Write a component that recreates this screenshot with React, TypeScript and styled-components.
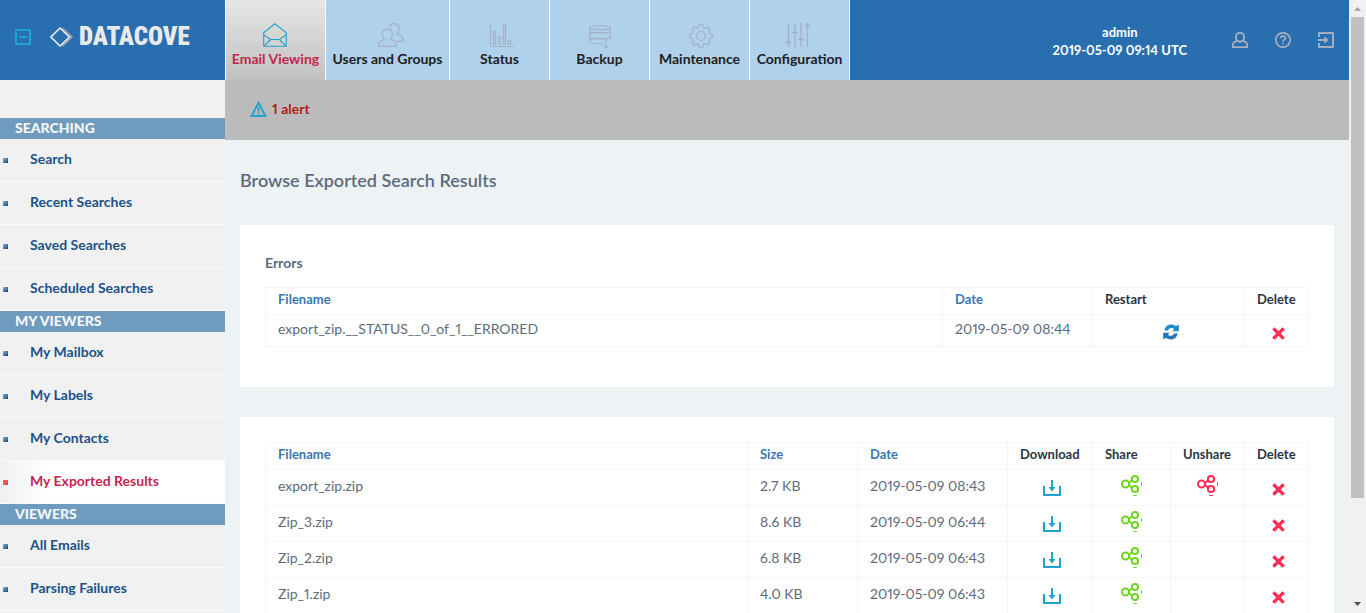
import React from "react";
import styled, { createGlobalStyle, css } from "styled-components";

const GlobalStyle = createGlobalStyle`
  *, *::before, *::after { box-sizing: border-box; }
  body {
    margin: 0;
    background: #edf2f5;
    color: #5c6b7c;
    font-family: Lato, "Liberation Sans", sans-serif;
    font-size: 14px;
    font-variant-numeric: proportional-nums;
    line-height: 18px;
  }
  a { color: inherit; text-decoration: none; }
  button { margin: 0; padding: 0; border: 0; background: none; color: inherit; font: inherit; cursor: pointer; }
  svg { display: block; overflow: visible; }
`;

const Window = styled.div`
  display: flex;
  height: 100vh;
`;

const Page = styled.div`
  display: flex;
  flex: 1;
  flex-direction: column;
  min-width: 0;
  overflow-y: auto;
  scrollbar-width: none;
`;

const ScrollRail = styled.div`
  display: flex;
  flex: none;
  flex-direction: column;
  align-items: center;
  width: 17px;
  background: #f1f1f1;
`;

const ScrollArrow = styled.div<{ $down?: boolean }>`
  display: flex;
  align-items: center;
  justify-content: center;
  height: 17px;
  color: ${(p) => (p.$down ? "#505050" : "#a3a3a3")};
  transform: ${(p) => (p.$down ? "rotate(180deg)" : "none")};
`;

const ScrollTrack = styled.div`
  display: flex;
  flex: 1;
  justify-content: center;
  width: 100%;
`;

const ScrollThumb = styled.div`
  width: 13px;
  height: 83%;
  background: #c1c1c1;
`;

const Header = styled.header`
  display: flex;
  flex: none;
  height: 80px;
  background: #296fb0;
`;

const Brand = styled.div`
  display: flex;
  flex: none;
  align-items: center;
  width: 225px;
  padding: 0 0 6px 15px;
`;

const CollapseButton = styled.button`
  margin-right: 19px;
  color: #1fa2cf;
`;

const Logo = styled.a`
  display: flex;
  align-items: center;
  gap: 6px;
  color: #e9eaec;
  font: 900 25px/30px "Roboto Condensed", "Open Sans Condensed", "Noto Sans Condensed", "DejaVu Sans Condensed", sans-serif;
`;

const Tabs = styled.nav`
  display: flex;
  flex: none;
  border-left: 1px solid #f7f9fa;
`;

const Tab = styled.a<{ $active?: boolean; $wide?: boolean }>`
  display: flex;
  flex-direction: column;
  align-items: center;
  gap: 3px;
  width: ${(p) => (p.$wide ? 124 : 100)}px;
  padding-top: 23px;
  border-right: 1px solid #f7f9fa;
  background: #afd1eb;
  color: #1d2023;
  font-weight: 700;
  white-space: nowrap;

  svg { color: #a3b0c8; }

  ${(p) =>
    p.$active &&
    css`
      background: linear-gradient(#e4e7e4, #c1c1c1);
      color: #c2274f;
      svg { color: #22a2cd; }
    `}
`;

const Account = styled.div`
  display: flex;
  flex: 1;
  align-items: center;
  justify-content: flex-end;
  padding-right: 15px;
`;

const AccountInfo = styled.div`
  margin-right: 45px;
  padding-top: 2px;
  color: #fff;
  font-size: 13px;
  font-weight: 700;
  text-align: center;
`;

const AccountActions = styled.div`
  display: flex;
  gap: 27px;
  color: #a5adc1;
`;

const Body = styled.div`
  display: flex;
  flex: 1 0 auto;
`;

const Sidebar = styled.nav`
  flex: none;
  width: 225px;
  padding-top: 38px;
  background: #f1f1f1;
`;

const SectionTitle = styled.h2`
  margin: 0;
  padding: 0 15px 2px;
  background: #6f9cbe;
  color: #f6f6f6;
  font-size: 14px;
  font-weight: 900;
  line-height: 19px;
`;

const SideList = styled.ul`
  margin: 0;
  padding: 0;
  list-style: none;
`;

const SideLink = styled.a<{ $active?: boolean }>`
  display: flex;
  align-items: center;
  gap: 22px;
  height: 43px;
  padding: 0 3px 2px;
  border-bottom: 1px solid #fafafa;
  color: ${(p) => (p.$active ? "#c2274f" : "#1c5289")};
  background: ${(p) => (p.$active ? "linear-gradient(90deg, #f1f1f1, #fff 50px)" : "none")};
  font-weight: 700;

  &::before {
    width: 5px;
    height: 5px;
    margin-top: 2px;
    background: ${(p) =>
      p.$active ? "linear-gradient(135deg, #f06a6a, #d84848)" : "linear-gradient(135deg, #86b0de, #173f78)"};
    content: "";
  }
`;

const Main = styled.main`
  flex: 1;
  min-width: 0;
`;

const AlertBar = styled.div`
  height: 60px;
  padding: 20px 25px;
  background: #bbb;
`;

const AlertLink = styled.a`
  display: inline-flex;
  align-items: center;
  gap: 5px;
  color: #b9191d;
  font-weight: 700;

  svg { color: #22a2cd; }
`;

const Content = styled.div`
  display: flex;
  flex-direction: column;
  gap: 30px;
  padding: 0 15px 30px;
`;

const PageTitle = styled.h1`
  margin: 30px 0 4px;
  font-size: 18px;
  font-weight: 600;
  line-height: 21px;
`;

const Panel = styled.section<{ $tall?: boolean }>`
  padding: 25px 25px ${(p) => (p.$tall ? 40 : 25)}px;
  background: #fff;
`;

const PanelTitle = styled.h2`
  margin: 4px 0 15px;
  font-size: 14px;
  font-weight: 700;
`;

const Table = styled.table`
  width: 100%;
  border-collapse: collapse;
  table-layout: fixed;

  th, td {
    border: 1px solid #f4f5f6;
    text-align: left;
    white-space: nowrap;
  }
`;

const Head = styled.th`
  height: 27px;
  padding: 0 8px 5px 12px;
  color: #2b3642;
  font-size: 13px;
  font-weight: 700;

  a { color: #3a76b4; }
`;

const Cell = styled.td<{ $short?: boolean }>`
  height: ${(p) => (p.$short ? 32 : 36)}px;
  padding: ${(p) => (p.$short ? 5 : 7)}px 8px 0 12px;
  vertical-align: top;
`;

const IconCell = styled(Cell)`
  padding: ${(p) => (p.$short ? 4 : 5)}px 8px 0 12px;
`;

const IconButton = styled.button<{ $color: string }>`
  display: block;
  margin: 0 auto;
  padding-top: 5px;
  color: ${(p) => p.$color};
`;

const ShareButton = styled(IconButton)`
  padding-top: 0;
`;

const line = { fill: "none", stroke: "currentColor" } as const;

const EmailIcon = () => (
  <svg width="24" height="24" viewBox="1 0 24 24" {...line} strokeWidth="1.1" aria-hidden="true">
    <path d="M.7 9.800 12 .7l11.300 9.100v13.500H.7ZM.7 11.800 7.600 16.500h8.800l6.900-4.700M.7 23.300l6.900-6.800M23.300 23.300l-6.900-6.800" />
  </svg>
);

const UsersIcon = () => (
  <svg width="26" height="24" viewBox="-3 0 26 24" {...line} strokeWidth="1.2" aria-hidden="true">
    <path d="M.7 23.400v-2.200c0-2.600 2.400-3.500 5.600-4.900C5 15.200 4.300 13.700 4.300 11.400c0-3.300 2.200-5.300 5-5.300s5 2 5 5.300c0 2.300-.7 3.800-2 4.900 3.200 1.400 5.900 2.300 5.900 4.900v2.200Z" />
    <path d="M11.300 4.500C12 2 13.600.7 16 .7c2.900 0 5 2 5 5.300 0 2.300-.7 3.800-2 4.900 3.200 1.400 5.900 2.300 5.900 4.900v2.600h-6.200" />
  </svg>
);

const StatusIcon = () => (
  <svg width="24" height="24" viewBox="-2 0 24 24" {...line} strokeWidth="1.200" aria-hidden="true">
    <path d="M.5 0v23.500H24" />
    <path d="M3.500 8h2v13.500h-2ZM8.500 13.500h2v8h-2ZM13.500 2h2v19.500h-2ZM18.500 17h2v4.500h-2Z" />
  </svg>
);

const BackupIcon = () => (
  <svg width="22" height="24" viewBox="0 -2 22 24" {...line} strokeWidth="1.100" aria-hidden="true">
    <ellipse cx="11" cy="2.700" rx="10.200" ry="2" />
    <path d="M.8 2.700v3c0 1.200 4.500 2.100 10.200 2.100s10.200-.9 10.200-2.100v-3" />
    <path d="M.8 5.700v6c0 1.200 4.500 2.100 10.200 2.100s10.200-.9 10.200-2.100v-6M.8 8.500c2-1.300 18.400-1.300 20.400 0" />
    <path d="M.8 11.700v5c0 1.300 4.500 2.100 10.200 2.100h2.500M21.200 11.700v3.300M.8 14.300c2-1.200 14-1.200 17 0" />
    <path d="M17 14.500v8.800M14.400 20.700 17 23.300l2.600-2.600" />
  </svg>
);

const gearPoint = (degrees: number, radius: number) => {
  const angle = (degrees * Math.PI) / 180;
  return `${(12 + radius * Math.cos(angle)).toFixed(2)} ${(12 + radius * Math.sin(angle)).toFixed(2)}`;
};

const gearPath =
  Array.from({ length: 8 }, (_, i) => {
    const a = i * 45;
    return `${i ? "L" : "M"}${gearPoint(a - 9, 11.4)}L${gearPoint(a + 9, 11.4)}L${gearPoint(a + 13, 9.4)}Q${gearPoint(a + 22.5, 8.4)} ${gearPoint(a + 32, 9.4)}`;
  }).join("") + "Z";

const GearIcon = () => (
  <svg width="24" height="24" viewBox="-1 -1 24 24" {...line} strokeWidth="1.200" strokeLinejoin="round" aria-hidden="true">
    <circle cx="12" cy="12" r="4.500" />
    <path d={gearPath} />
  </svg>
);

const SlidersIcon = () => (
  <svg width="24" height="24" viewBox="2 0 24 24" {...line} strokeWidth="1.300" aria-hidden="true">
    <path d="M2.500 0v24M9 0v24M15 0v24M21.500 0v24M0 19.500h5.500M6 9.500h6M12 16.500h6M19 2.500h5" />
  </svg>
);

const CollapseIcon = () => (
  <svg width="16" height="16" viewBox="0 0 16 16" {...line} strokeWidth="2" aria-hidden="true">
    <path d="M1 1h14v14H1ZM4 8h8" />
  </svg>
);

const DiamondIcon = () => (
  <svg width="23" height="20" viewBox="0 0 23 20" fill="none" aria-hidden="true">
    <path d="M12.500 1l9.500 9-9.500 9" stroke="#a9a4a2" strokeWidth="1.500" />
    <path d="M10 1l9.500 9-9.500 9L.9 10Z" stroke="#eef1f4" strokeWidth="1.600" />
  </svg>
);

const UserIcon = () => (
  <svg width="16" height="16" viewBox="0 0 16 16" {...line} strokeWidth="1.900" aria-hidden="true">
    <path d="M5.400 8.700C4.300 7.700 3.800 6.500 3.800 5a4.200 4.200 0 0 1 8.400 0c0 1.500-.5 2.700-1.600 3.700 2.400.8 4.500 1.700 4.500 4v2.400H.9v-2.400c0-2.300 2.100-3.200 4.500-4Zm0 0c1.500 1.200 3.700 1.200 5.200 0" />
  </svg>
);

const HelpIcon = () => (
  <svg width="16" height="16" viewBox="0 0 16 16" {...line} strokeWidth="1.700" aria-hidden="true">
    <circle cx="8" cy="8" r="7.200" />
    <path d="M5.800 6.300c0-1.300.9-2.100 2.200-2.100s2.300.8 2.300 2c0 1.500-2.300 1.600-2.300 3.300M8 10.700v1.600" />
  </svg>
);

const LogoutIcon = () => (
  <svg width="16" height="16" viewBox="0 0 16 16" {...line} strokeWidth="1.900" aria-hidden="true">
    <path d="M1 5V1h14v14H1V11M0 8h9M6.500 5.500 9.200 8l-2.700 2.500" />
  </svg>
);

const AlertIcon = () => (
  <svg width="17" height="16" viewBox="0 0 17 16" {...line} strokeWidth="1.900" aria-hidden="true">
    <path d="M8.500 1.800 15.500 15h-14ZM8.500 6v4.500M8.500 11.500v1.700" />
  </svg>
);

const RefreshIcon = () => (
  <svg width="16" height="16" viewBox="0 0 16 16" aria-hidden="true">
    <path d="M1.200 6.500C2.200 2.800 4.600.5 8 .5c2 0 3.600.6 5 1.700L15.800.6v6.600H9.200l2-2C9.200 3.300 6.300 3.800 4.800 6.500Z" fill="#1f8bc8" />
    <path d="M14.800 9.500c-1 3.700-3.400 6-6.800 6-2 0-3.600-.6-5-1.700L.2 15.400V8.800h6.600l-2 2c2 1.900 4.900 1.400 6.400-1.300Z" fill="#2473b4" />
  </svg>
);

const DeleteIcon = () => (
  <svg width="13" height="16" viewBox="0 -3 13 16" {...line} strokeWidth="3.400" aria-hidden="true">
    <path d="M1.400 1.400l10.200 10.200M11.600 1.400 1.400 11.600" />
  </svg>
);

const DownloadIcon = () => (
  <svg width="18" height="16" viewBox="0 0 18 16" {...line} strokeWidth="2" aria-hidden="true">
    <path d="M1 6v9h16V6M9 0v9" />
    <path d="M5.500 7h7L9 11.500Z" fill="currentColor" stroke="none" />
  </svg>
);

const ShareIcon = () => (
  <svg width="24" height="24" viewBox="1 0 24 24" {...line} strokeWidth="2" aria-hidden="true">
    <circle cx="4.500" cy="9" r="3.500" />
    <circle cx="14" cy="4" r="3.100" />
    <circle cx="14" cy="14" r="3.100" />
    <path d="M7.500 8c2 0 2-2.500 3.700-3M7.500 10c2 0 2 2.500 3.700 3" />
    <path d="M20.500 7.200v3.600M12.200 20.500h3.600" strokeWidth="1" />
  </svg>
);

const ArrowGlyph = () => (
  <svg width="7" height="4" viewBox="0 0 7 4" fill="currentColor" aria-hidden="true">
    <path d="M0 4 3.500 0 7 4Z" />
  </svg>
);

const tabs = [
  { label: "Email Viewing", Icon: EmailIcon, active: true },
  { label: "Users and Groups", Icon: UsersIcon, wide: true },
  { label: "Status", Icon: StatusIcon },
  { label: "Backup", Icon: BackupIcon },
  { label: "Maintenance", Icon: GearIcon },
  { label: "Configuration", Icon: SlidersIcon },
];

const sections = [
  { title: "SEARCHING", items: ["Search", "Recent Searches", "Saved Searches", "Scheduled Searches"] },
  { title: "MY VIEWERS", items: ["My Mailbox", "My Labels", "My Contacts", "My Exported Results"] },
  { title: "VIEWERS", items: ["All Emails", "Parsing Failures"] },
];

const exportsList = [
  { name: "export_zip.zip", size: "2.7 KB", date: "2019-05-09 08:43", shared: true },
  { name: "Zip_3.zip", size: "8.6 KB", date: "2019-05-09 06:44" },
  { name: "Zip_2.zip", size: "6.8 KB", date: "2019-05-09 06:43" },
  { name: "Zip_1.zip", size: "4.0 KB", date: "2019-05-09 06:43" },
];

const Columns = ({ widths }: { widths: number[] }) => (
  <colgroup>
    <col />
    {widths.map((width, i) => (
      <col key={i} width={width} />
    ))}
  </colgroup>
);

export default function App() {
  return (
    <Window>
      <GlobalStyle />
      <Page>
        <Header>
          <Brand>
            <CollapseButton aria-label="Collapse menu"><CollapseIcon /></CollapseButton>
            <Logo href="#"><DiamondIcon />DATACOVE</Logo>
          </Brand>
          <Tabs>
            {tabs.map(({ label, Icon, active, wide }) => (
              <Tab key={label} href="#" $active={active} $wide={wide}>
                <Icon />
                {label}
              </Tab>
            ))}
          </Tabs>
          <Account>
            <AccountInfo>
              <div>admin</div>
              <div>2019-05-09 09:14 UTC</div>
            </AccountInfo>
            <AccountActions>
              <button aria-label="Profile"><UserIcon /></button>
              <button aria-label="Help"><HelpIcon /></button>
              <button aria-label="Log out"><LogoutIcon /></button>
            </AccountActions>
          </Account>
        </Header>
        <Body>
          <Sidebar>
            {sections.map(({ title, items }) => (
              <React.Fragment key={title}>
                <SectionTitle>{title}</SectionTitle>
                <SideList>
                  {items.map((item) => (
                    <li key={item}>
                      <SideLink href="#" $active={item === "My Exported Results"}>{item}</SideLink>
                    </li>
                  ))}
                </SideList>
              </React.Fragment>
            ))}
          </Sidebar>
          <Main>
            <AlertBar>
              <AlertLink href="#"><AlertIcon />1 alert</AlertLink>
            </AlertBar>
            <Content>
              <PageTitle>Browse Exported Search Results</PageTitle>
              <Panel $tall>
                <PanelTitle>Errors</PanelTitle>
                <Table>
                  <Columns widths={[150, 152, 64]} />
                  <thead>
                    <tr>
                      <Head><a href="#">Filename</a></Head>
                      <Head><a href="#">Date</a></Head>
                      <Head>Restart</Head>
                      <Head>Delete</Head>
                    </tr>
                  </thead>
                  <tbody>
                    <tr>
                      <Cell $short>export_zip.__STATUS__0_of_1__ERRORED</Cell>
                      <Cell $short>2019-05-09 08:44</Cell>
                      <IconCell $short><IconButton $color="#1d84c0" aria-label="Restart"><RefreshIcon /></IconButton></IconCell>
                      <IconCell $short><IconButton $color="#fb2d55" aria-label="Delete"><DeleteIcon /></IconButton></IconCell>
                    </tr>
                  </tbody>
                </Table>
              </Panel>
              <Panel>
                <Table>
                  <Columns widths={[110, 150, 85, 78, 74, 64]} />
                  <thead>
                    <tr>
                      <Head><a href="#">Filename</a></Head>
                      <Head><a href="#">Size</a></Head>
                      <Head><a href="#">Date</a></Head>
                      <Head>Download</Head>
                      <Head>Share</Head>
                      <Head>Unshare</Head>
                      <Head>Delete</Head>
                    </tr>
                  </thead>
                  <tbody>
                    {exportsList.map((row) => (
                      <tr key={row.name}>
                        <Cell>{row.name}</Cell>
                        <Cell>{row.size}</Cell>
                        <Cell>{row.date}</Cell>
                        <IconCell><IconButton $color="#22a2cd" aria-label="Download"><DownloadIcon /></IconButton></IconCell>
                        <IconCell><ShareButton $color="#74d31f" aria-label="Share"><ShareIcon /></ShareButton></IconCell>
                        <IconCell>
                          {row.shared && <ShareButton $color="#fb2d55" aria-label="Unshare"><ShareIcon /></ShareButton>}
                        </IconCell>
                        <IconCell><IconButton $color="#fb2d55" aria-label="Delete"><DeleteIcon /></IconButton></IconCell>
                      </tr>
                    ))}
                  </tbody>
                </Table>
              </Panel>
            </Content>
          </Main>
        </Body>
      </Page>
      <ScrollRail>
        <ScrollArrow><ArrowGlyph /></ScrollArrow>
        <ScrollTrack><ScrollThumb /></ScrollTrack>
        <ScrollArrow $down><ArrowGlyph /></ScrollArrow>
      </ScrollRail>
    </Window>
  );
}
